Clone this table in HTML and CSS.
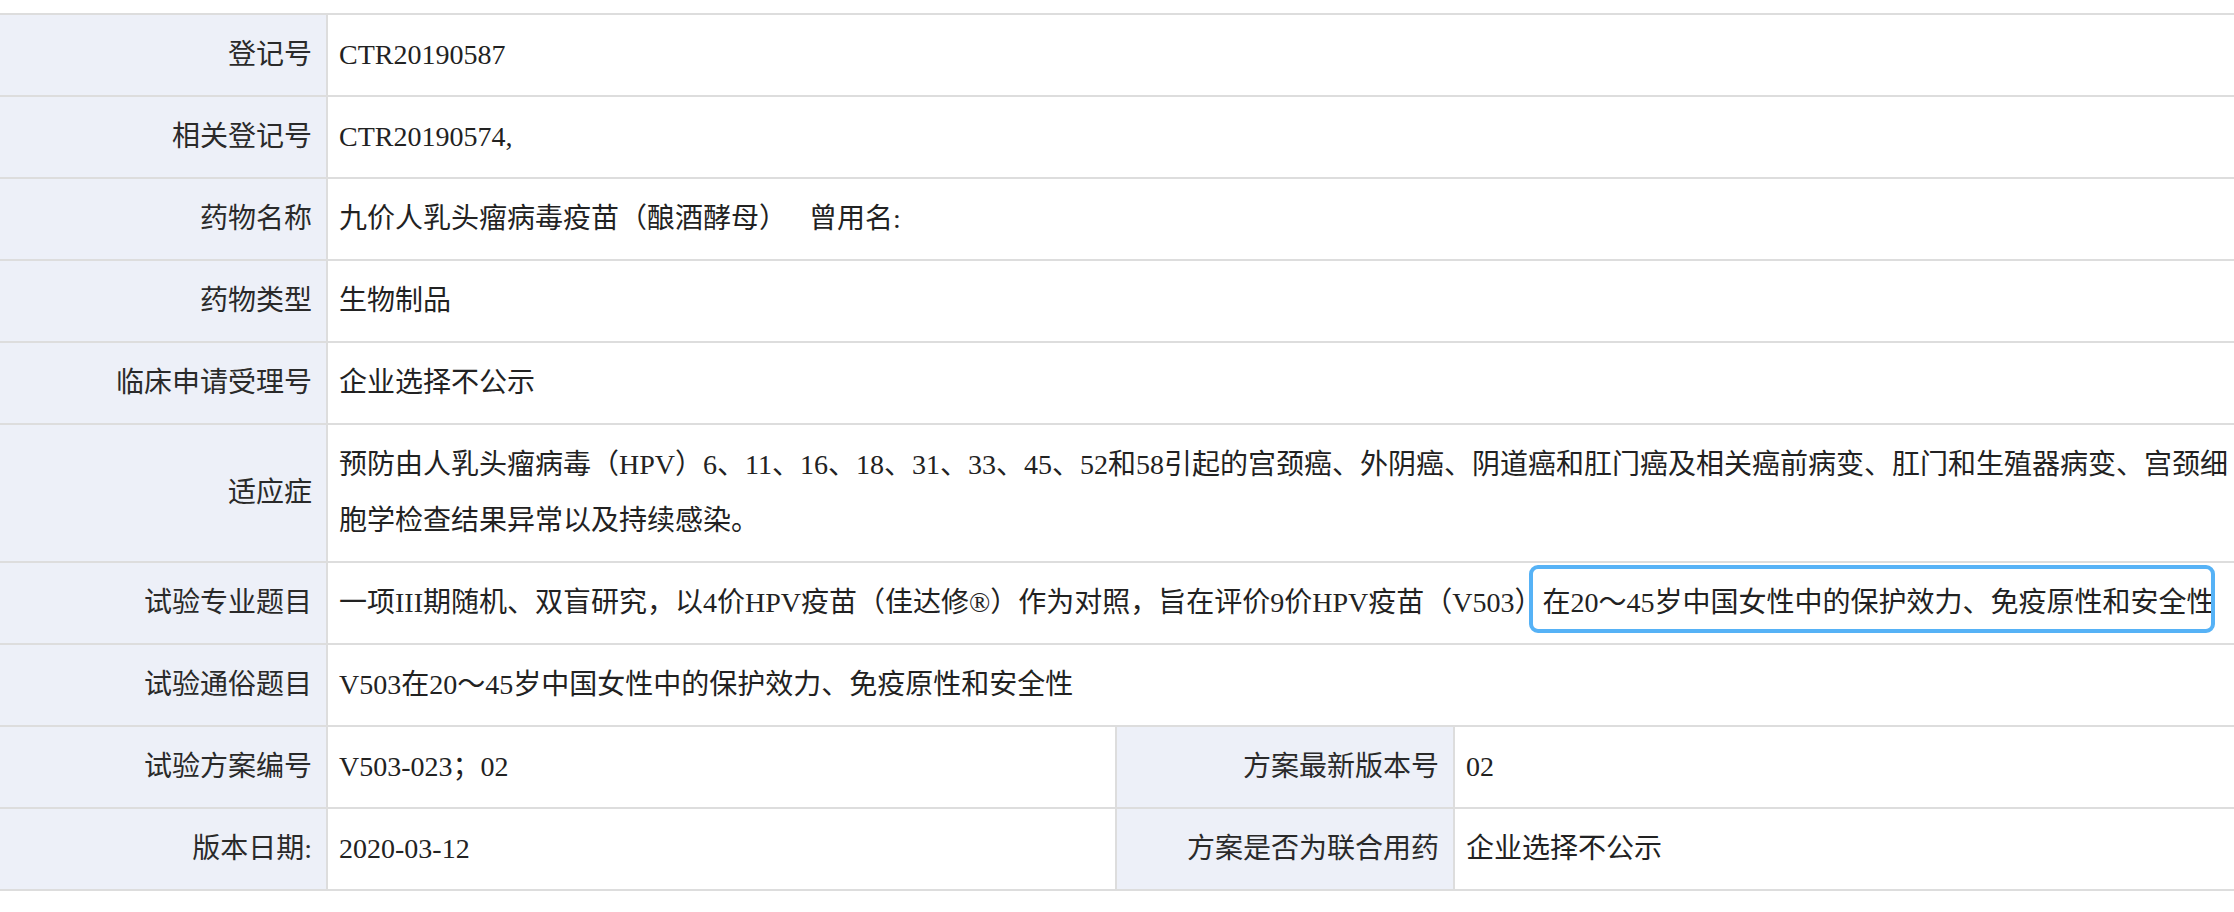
FILE: index.html
```html
<!DOCTYPE html>
<html lang="zh-CN">
<head>
<meta charset="utf-8">
<title>试验信息</title>
<link rel="stylesheet" href="styles.css">
</head>
<body>
<div class="page">
  <table class="info">
    <colgroup>
      <col class="c-label1">
      <col class="c-value1">
      <col class="c-label2">
      <col class="c-value2">
    </colgroup>
    <tbody>
      <tr><th>登记号</th><td colspan="3">CTR20190587</td></tr>
      <tr><th>相关登记号</th><td colspan="3">CTR20190574,</td></tr>
      <tr><th>药物名称</th><td colspan="3">九价人乳头瘤病毒疫苗（酿酒酵母）<span class="alias">曾用名:</span></td></tr>
      <tr><th>药物类型</th><td colspan="3">生物制品</td></tr>
      <tr><th>临床申请受理号</th><td colspan="3">企业选择不公示</td></tr>
      <tr><th>适应症</th><td colspan="3">预防由人乳头瘤病毒（HPV）6、11、16、18、31、33、45、52和58引起的宫颈癌、外阴癌、阴道癌和肛门癌及相关癌前病变、肛门和生殖器病变、宫颈细胞学检查结果异常以及持续感染。</td></tr>
      <tr><th>试验专业题目</th><td colspan="3" class="nowrap">一项III期随机、双盲研究，以4价HPV疫苗（佳达修®）作为对照，旨在评价9价HPV疫苗（V503）<span class="hl">在20～45岁中国女性中的保护效力、免疫原性和安全性</span></td></tr>
      <tr><th>试验通俗题目</th><td colspan="3">V503在20～45岁中国女性中的保护效力、免疫原性和安全性</td></tr>
      <tr><th>试验方案编号</th><td>V503-023；02</td><th>方案最新版本号</th><td>02</td></tr>
      <tr><th>版本日期:</th><td>2020-03-12</td><th>方案是否为联合用药</th><td>企业选择不公示</td></tr>
    </tbody>
  </table>
</div>
</body>
</html>
```

FILE: styles.css
```css
html, body {
  margin: 0;
  padding: 0;
  background: #ffffff;
  overflow: hidden;
}

.page {
  padding-top: 13px;
  width: 2256px;
}

.info {
  border-collapse: separate;
  border-spacing: 0;
  table-layout: fixed;
  width: 2256px;
  border-top: 2px solid #dddddd;
  font-family: "Liberation Serif", "Noto Sans CJK SC", serif;
  font-size: 28px;
  line-height: 56px;
  color: #222222;
}

.c-label1 { width: 328px; }
.c-value1 { width: 789px; }
.c-label2 { width: 338px; }
.c-value2 { width: auto; }

.info th,
.info td {
  border-right: 2px solid #dddddd;
  border-bottom: 2px solid #dddddd;
  padding: 12px 11px;
  vertical-align: middle;
  font-weight: normal;
}

.info th {
  background: #edf0f8;
  text-align: right;
  padding-right: 14px;
  color: #2a2a2a;
}

.info td {
  text-align: left;
  background: #ffffff;
}

.nowrap {
  white-space: nowrap;
}

.alias {
  margin-left: 22px;
}

.hl {
  position: relative;
}

.hl::after {
  content: "";
  position: absolute;
  left: -14px;
  right: 0;
  top: -22px;
  bottom: -15px;
  border: 4px solid #56b2f6;
  border-radius: 9px;
  pointer-events: none;
}
```
